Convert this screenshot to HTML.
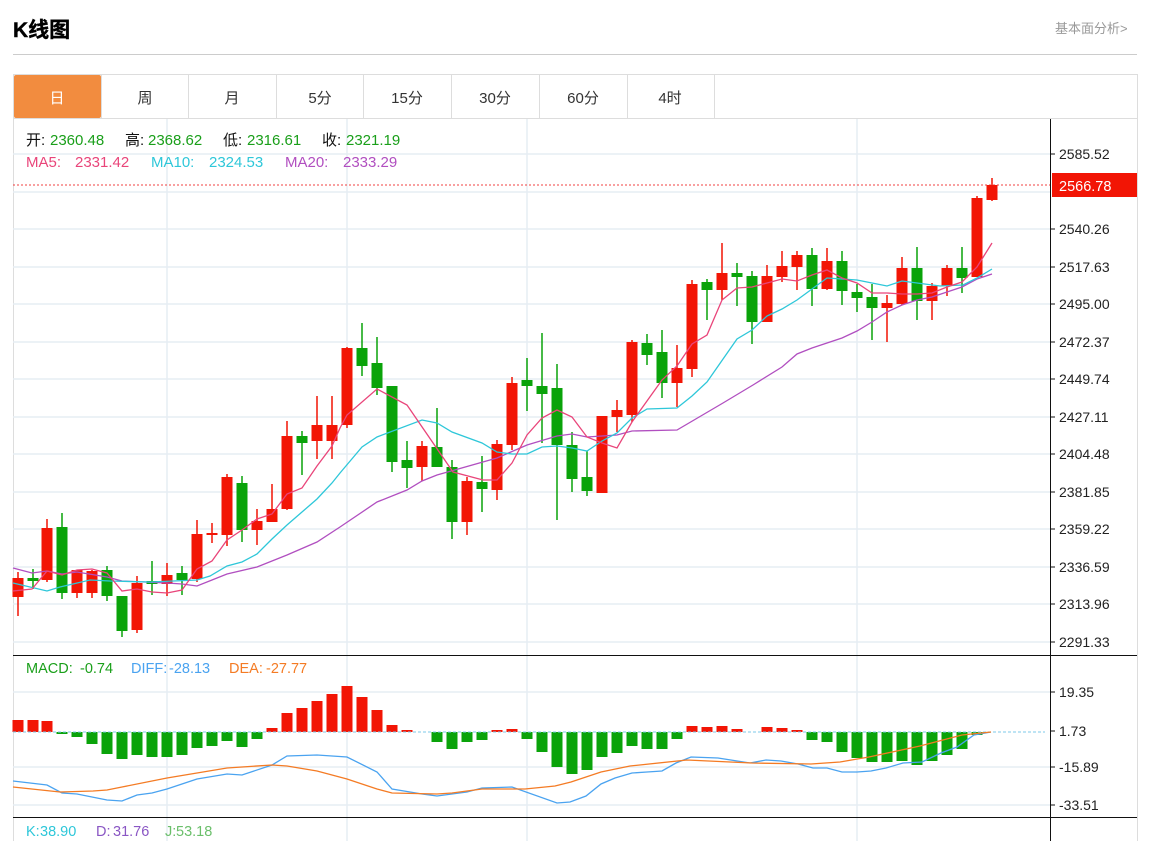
<!DOCTYPE html>
<html><head><meta charset="utf-8"><style>
*{margin:0;padding:0;box-sizing:border-box}
body{width:1158px;height:841px;background:#fff;font-family:"Liberation Sans","Noto Sans CJK SC",sans-serif;overflow:hidden;position:relative}
.t{position:absolute;white-space:nowrap}
</style></head><body>
<div class="t" style="left:13px;top:14px;font-size:21px;font-weight:bold;color:#000;-webkit-text-stroke:0.4px #000">K线图</div>
<div class="t" style="left:1055px;top:18px;font-size:13px;color:#999">基本面分析&gt;</div>
<div style="position:absolute;left:13px;top:54px;width:1124px;height:1px;background:#ccc"></div>
<svg style="position:absolute;left:0;top:0" width="1158" height="841" font-family="Liberation Sans, Noto Sans CJK SC, sans-serif">
<rect x="13.5" y="74.5" width="1124" height="780" fill="none" stroke="#ddd"/>
<line x1="13" y1="118.5" x2="1137" y2="118.5" stroke="#ddd"/>
<rect x="14" y="75" width="87" height="43" rx="2" fill="#f28c3f"/>
<g stroke="#ddd"><line x1="101.5" y1="75" x2="101.5" y2="118"/><line x1="188.5" y1="75" x2="188.5" y2="118"/><line x1="276.5" y1="75" x2="276.5" y2="118"/><line x1="363.5" y1="75" x2="363.5" y2="118"/><line x1="451.5" y1="75" x2="451.5" y2="118"/><line x1="539.5" y1="75" x2="539.5" y2="118"/><line x1="627.5" y1="75" x2="627.5" y2="118"/><line x1="714.5" y1="75" x2="714.5" y2="118"/></g>
<g font-size="15" text-anchor="middle" fill="#333"><text x="57" y="103" fill="#fff">日</text><text x="145" y="103">周</text><text x="232" y="103">月</text><text x="320" y="103">5分</text><text x="407" y="103">15分</text><text x="495" y="103">30分</text><text x="583" y="103">60分</text><text x="670" y="103">4时</text></g>
<g stroke="#e6edf3" stroke-width="1.5">
<line x1="13" y1="154" x2="1050" y2="154"/><line x1="13" y1="192" x2="1050" y2="192"/><line x1="13" y1="229" x2="1050" y2="229"/><line x1="13" y1="267" x2="1050" y2="267"/><line x1="13" y1="304" x2="1050" y2="304"/><line x1="13" y1="342" x2="1050" y2="342"/><line x1="13" y1="379" x2="1050" y2="379"/><line x1="13" y1="417" x2="1050" y2="417"/><line x1="13" y1="454" x2="1050" y2="454"/><line x1="13" y1="492" x2="1050" y2="492"/><line x1="13" y1="529" x2="1050" y2="529"/><line x1="13" y1="567" x2="1050" y2="567"/><line x1="13" y1="604" x2="1050" y2="604"/><line x1="13" y1="642" x2="1050" y2="642"/>
<line x1="13" y1="692" x2="1050" y2="692"/><line x1="13" y1="767" x2="1050" y2="767"/><line x1="13" y1="805" x2="1050" y2="805"/>
<line x1="167" y1="119" x2="167" y2="841"/><line x1="347" y1="119" x2="347" y2="841"/><line x1="527" y1="119" x2="527" y2="841"/><line x1="857" y1="119" x2="857" y2="841"/>
</g>
<line x1="13" y1="185" x2="1050" y2="185" stroke="#f04040" stroke-dasharray="2,2"/>
<g stroke-width="1.5">
<path fill="none" stroke="#f21505" d="M18 572V616M47 519V582M77 570V598M92 570V598M137 576V633M167 563V596M197 520V582M212 523V543M227 474V546M257 509V545M272 484V522M287 421V510M317 396V459M332 396V459M347 347V428M422 441V481M467 477V535M497 440V500M512 377V450M602 416V493M617 400V432M632 340V422M677 345V407M692 280V377M722 243V300M767 265V322M782 251V282M797 251V290M827 248V290M887 295V342M902 257V305M932 283V320M947 265V296M977 196V277M992 178V201"/>
<path fill="none" stroke="#0aa30a" d="M33 569V589M62 513V599M107 566V601M122 596V637M152 561V595M182 566V595M242 476V542M302 431V475M362 323V376M377 337V395M392 386V472M407 441V488M437 408V467M452 460V539M482 456V512M527 358V411M542 333V443M557 364V520M572 432V492M587 451V496M647 334V365M662 330V398M707 279V320M737 263V306M752 271V344M812 248V306M842 251V305M857 284V312M872 284V340M917 247V320M962 247V293"/>
</g>
<path fill="#f21505" d="M12.5 578h11V597h-11zM41.5 528h11V580h-11zM71.5 570h11V593h-11zM86.5 571h11V593h-11zM131.5 583h11V630h-11zM161.5 575h11V584h-11zM191.5 534h11V579h-11zM206.5 533h11V535h-11zM221.5 477h11V535h-11zM251.5 521h11V530h-11zM266.5 509h11V522h-11zM281.5 436h11V509h-11zM311.5 425h11V441h-11zM326.5 425h11V441h-11zM341.5 348h11V425h-11zM416.5 446h11V467h-11zM461.5 481h11V522h-11zM491.5 444h11V490h-11zM506.5 383h11V445h-11zM596.5 416h11V493h-11zM611.5 410h11V417h-11zM626.5 342h11V415h-11zM671.5 368h11V383h-11zM686.5 284h11V369h-11zM716.5 273h11V290h-11zM761.5 276h11V322h-11zM776.5 266h11V277h-11zM791.5 255h11V267h-11zM821.5 261h11V289h-11zM881.5 303h11V308h-11zM896.5 268h11V304h-11zM926.5 286h11V301h-11zM941.5 268h11V286h-11zM971.5 198h11V277h-11zM986.5 185h11V200h-11z"/>
<path fill="#0aa30a" d="M27.5 578h11V581h-11zM56.5 527h11V593h-11zM101.5 570h11V596h-11zM116.5 596h11V631h-11zM146.5 581h11V584h-11zM176.5 573h11V580h-11zM236.5 483h11V530h-11zM296.5 436h11V443h-11zM356.5 348h11V366h-11zM371.5 363h11V388h-11zM386.5 386h11V462h-11zM401.5 460h11V468h-11zM431.5 447h11V467h-11zM446.5 467h11V522h-11zM476.5 482h11V489h-11zM521.5 380h11V386h-11zM536.5 386h11V394h-11zM551.5 388h11V445h-11zM566.5 445h11V479h-11zM581.5 477h11V491h-11zM641.5 343h11V355h-11zM656.5 352h11V383h-11zM701.5 282h11V290h-11zM731.5 273h11V277h-11zM746.5 276h11V322h-11zM806.5 255h11V289h-11zM836.5 261h11V291h-11zM851.5 292h11V298h-11zM866.5 297h11V308h-11zM911.5 268h11V301h-11zM956.5 268h11V278h-11z"/>
<g fill="none" stroke-width="1.3">
<polyline stroke="#b14fc0" points="13,568 32,573 47,571 62,574 77,572 107,577 122,581 167,583 182,584 197,586 212,580 227,574 257,567 287,555 317,542 340,527 377,502 407,490 422,481 437,475 497,458 527,445 557,436 572,434 587,437 617,435 632,431 677,430 723,403 753,385 782,367 797,354 812,348 842,338 857,331 872,322 887,312 902,305 917,300 932,297 947,292 962,287 977,279 992,274"/>
<polyline stroke="#2ec7d9" points="13,583 47,591 60,587 90,580 110,581 150,582 197,580 210,576 227,566 242,562 257,554 272,539 287,525 302,512 317,499 332,483 340,473 362,447 377,437 422,420 437,423 452,432 482,443 497,452 512,454 527,454 542,447 557,446 572,448 587,451 602,441 617,433 632,418 647,409 677,408 692,396 707,382 737,339 752,330 767,316 782,309 797,300 812,289 827,278 857,280 872,283 887,286 902,281 917,283 940,286 963,285 977,278 992,269"/>
<polyline stroke="#e9457a" points="13,591 32,589 47,571 62,575 77,570 92,569 107,573 122,591 137,589 152,592 167,593 182,590 197,569 212,561 227,540 242,530 257,519 272,514 287,494 302,488 317,466 332,446 340,428 347,415 377,389 407,405 453,472 483,480 497,480 512,463 527,435 542,418 557,410 572,417 587,437 602,443 617,448 632,422 662,380 677,366 692,344 707,335 722,300 737,288 752,287 767,283 782,279 797,281 812,275 827,270 842,278 857,283 872,293 887,293 902,294 917,294 932,293 947,287 962,282 977,267 992,243"/>
</g>
<g font-size="15">
<g fill="#111"><text x="26" y="145">开:</text><text x="125" y="145">高:</text><text x="223" y="145">低:</text><text x="322" y="145">收:</text></g>
<g fill="#1a9f1a"><text x="50" y="145">2360.48</text><text x="148" y="145">2368.62</text><text x="247" y="145">2316.61</text><text x="346" y="145">2321.19</text></g>
<g fill="#e9457a"><text x="26" y="167">MA5:</text><text x="75" y="167">2331.42</text></g>
<g fill="#2ec7d9"><text x="151" y="167">MA10:</text><text x="209" y="167">2324.53</text></g>
<g fill="#b14fc0"><text x="285" y="167">MA20:</text><text x="343" y="167">2333.29</text></g>
</g>
<line x1="1050.5" y1="119" x2="1050.5" y2="841" stroke="#111"/>
<line x1="13" y1="655.5" x2="1137" y2="655.5" stroke="#111"/>
<line x1="13" y1="817.5" x2="1137" y2="817.5" stroke="#111"/>
<g stroke="#111"><line x1="1050" y1="154" x2="1055" y2="154"/><line x1="1050" y1="229" x2="1055" y2="229"/><line x1="1050" y1="267" x2="1055" y2="267"/><line x1="1050" y1="304" x2="1055" y2="304"/><line x1="1050" y1="342" x2="1055" y2="342"/><line x1="1050" y1="379" x2="1055" y2="379"/><line x1="1050" y1="417" x2="1055" y2="417"/><line x1="1050" y1="454" x2="1055" y2="454"/><line x1="1050" y1="492" x2="1055" y2="492"/><line x1="1050" y1="529" x2="1055" y2="529"/><line x1="1050" y1="567" x2="1055" y2="567"/><line x1="1050" y1="604" x2="1055" y2="604"/><line x1="1050" y1="642" x2="1055" y2="642"/><line x1="1050" y1="692" x2="1055" y2="692"/><line x1="1050" y1="731" x2="1055" y2="731"/><line x1="1050" y1="767" x2="1055" y2="767"/><line x1="1050" y1="805" x2="1055" y2="805"/></g>
<g font-size="14" fill="#222">
<text x="1059" y="159">2585.52</text><text x="1059" y="197">2562.89</text><text x="1059" y="234">2540.26</text><text x="1059" y="272">2517.63</text><text x="1059" y="309">2495.00</text><text x="1059" y="347">2472.37</text><text x="1059" y="384">2449.74</text><text x="1059" y="422">2427.11</text><text x="1059" y="459">2404.48</text><text x="1059" y="497">2381.85</text><text x="1059" y="534">2359.22</text><text x="1059" y="572">2336.59</text><text x="1059" y="609">2313.96</text><text x="1059" y="647">2291.33</text>
<text x="1059" y="697">19.35</text><text x="1059" y="736">1.73</text><text x="1059" y="772">-15.89</text><text x="1059" y="810">-33.51</text>
</g>
<rect x="1052" y="173" width="85" height="24" fill="#f21505"/>
<text x="1059" y="191" font-size="14.5" fill="#fff">2566.78</text>
<path fill="#f21505" d="M12.5 720h11V732h-11zM27.5 720h11V732h-11zM41.5 721h11V732h-11zM266.5 728h11V732h-11zM281.5 713h11V732h-11zM296.5 708h11V732h-11zM311.5 701h11V732h-11zM326.5 694h11V732h-11zM341.5 686h11V732h-11zM356.5 697h11V732h-11zM371.5 710h11V732h-11zM386.5 725h11V732h-11zM401.5 730h11V732h-11zM491.5 730h11V732h-11zM506.5 729h11V732h-11zM686.5 726h11V732h-11zM701.5 727h11V732h-11zM716.5 726h11V732h-11zM731.5 729h11V732h-11zM761.5 727h11V732h-11zM776.5 728h11V732h-11zM791.5 730h11V732h-11z"/>
<path fill="#0aa30a" d="M56.5 732h11V734h-11zM71.5 732h11V737h-11zM86.5 732h11V744h-11zM101.5 732h11V754h-11zM116.5 732h11V759h-11zM131.5 732h11V755h-11zM146.5 732h11V757h-11zM161.5 732h11V757h-11zM176.5 732h11V755h-11zM191.5 732h11V748h-11zM206.5 732h11V746h-11zM221.5 732h11V741h-11zM236.5 732h11V747h-11zM251.5 732h11V739h-11zM431.5 732h11V742h-11zM446.5 732h11V749h-11zM461.5 732h11V742h-11zM476.5 732h11V740h-11zM521.5 732h11V739h-11zM536.5 732h11V752h-11zM551.5 732h11V767h-11zM566.5 732h11V774h-11zM581.5 732h11V770h-11zM596.5 732h11V757h-11zM611.5 732h11V753h-11zM626.5 732h11V746h-11zM641.5 732h11V749h-11zM656.5 732h11V749h-11zM671.5 732h11V739h-11zM806.5 732h11V740h-11zM821.5 732h11V742h-11zM836.5 732h11V752h-11zM851.5 732h11V758h-11zM866.5 732h11V762h-11zM881.5 732h11V762h-11zM896.5 732h11V761h-11zM911.5 732h11V765h-11zM926.5 732h11V761h-11zM941.5 732h11V755h-11zM956.5 732h11V749h-11zM971.5 732h11V735h-11z"/>
<line x1="13" y1="732" x2="1045" y2="732" stroke="#7cc8e8" stroke-dasharray="3,2"/>
<g fill="none" stroke-width="1.3">
<polyline stroke="#4aa3f0" points="13,781 47,785 62,793 77,794 107,800 122,801 137,795 152,793 167,789 182,784 197,779 227,774 242,775 272,765 287,756 317,755 347,757 377,772 392,789 422,794 437,796 467,792 482,788 512,787 557,803 570,802 586,796 601,784 615,778 632,773 647,772 662,771 676,763 691,757 718,758 750,763 766,760 781,761 798,764 813,768 827,768 842,772 857,772 871,771 886,768 903,763 922,762 941,753 957,747 974,735 991,732"/>
<polyline stroke="#f47b24" points="13,787 60,792 93,791 107,790 122,787 167,778 197,773 227,768 242,767 272,765 287,766 317,771 347,779 377,789 392,793 437,794 452,793 482,789 510,789 525,789 555,786 571,782 601,772 630,766 687,760 752,763 811,764 840,762 869,757 920,746 962,735 991,732"/>
</g>
<g font-size="14.5">
<g fill="#1a9f1a"><text x="26" y="673">MACD:</text><text x="80" y="673">-0.74</text></g>
<g fill="#4aa3f0"><text x="131" y="673">DIFF:</text><text x="169" y="673">-28.13</text></g>
<g fill="#f47b24"><text x="229" y="673">DEA:</text><text x="266" y="673">-27.77</text></g>
<g fill="#2ec7d9"><text x="26" y="836">K:</text><text x="40" y="836">38.90</text></g>
<g fill="#8a56c4"><text x="96" y="836">D:</text><text x="113" y="836">31.76</text></g>
<g fill="#6bbf6b"><text x="165" y="836">J:</text><text x="176" y="836">53.18</text></g>
</g>
</svg>
</body></html>
